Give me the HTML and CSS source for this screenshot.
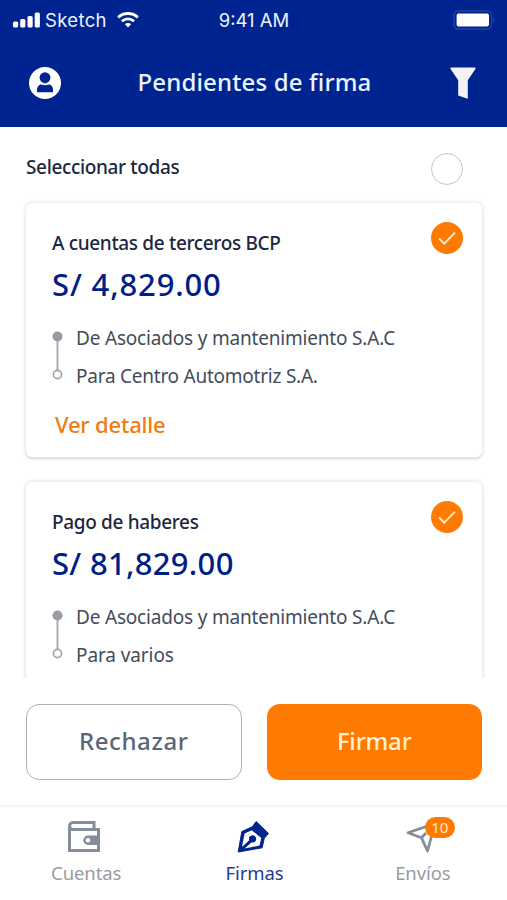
FILE: index.html
```html
<!DOCTYPE html>
<html lang="es">
<head>
<meta charset="utf-8">
<title>Pendientes de firma</title>
<link rel="stylesheet" href="styles.css">
</head>
<body>
<div class="app">
  <header class="header">
    <div class="status">
      <div class="status-left">
        <svg class="signal" width="27" height="16" viewBox="0 0 27 16" fill="#fff"><rect x="0" y="9.5" width="5.2" height="6" rx="1.5"/><rect x="7.2" y="7" width="5.2" height="8.5" rx="1.5"/><rect x="14.5" y="4" width="5.2" height="11.5" rx="1.5"/><rect x="21.700" y="0.500" width="5.200" height="15" rx="1.500"/></svg>
        <span class="carrier">Sketch</span>
        <svg class="wifi" width="22" height="16" viewBox="0 0 22 16"><path d="M1.2 5.3C6.8.3 15.2.3 20.8 5.3" fill="none" stroke="#fff" stroke-width="2.900"/><path d="M4.900 9.200c3.500-3.100 8.700-3.100 12.200 0" fill="none" stroke="#fff" stroke-width="2.600"/><path d="M7.800 12.100c1.800-1.600 4.600-1.600 6.400 0L11 15.400z" fill="#fff"/></svg>
      </div>
      <span class="time">9:41 AM</span>
      <div class="status-right">
        <svg width="42" height="20" viewBox="0 0 42 20"><rect x="1" y="1" width="37.500" height="18" rx="4.500" fill="none" stroke="#1d45a4" stroke-width="1.400"/><rect x="3.600" y="3.600" width="32.400" height="12.800" rx="1.800" fill="#fff"/><path d="M40 7.500c1.500.8 1.500 4.200 0 5z" fill="#1d45a4"/></svg>
      </div>
    </div>
    <div class="navbar">
      <svg class="avatar" width="32" height="32" viewBox="0 0 32 32"><circle cx="16" cy="16" r="16" fill="#fff"/><circle cx="16" cy="10.600" r="5.400" fill="#00248f"/><path d="M8 25.300v-2.500c0-4 3-6 8-6s8 2 8 6v2.500z" fill="#00248f"/><path d="M10.500 14.500c1.200 2.400 3.200 3.200 5.500 3.200s4.300-.8 5.500-3.200" fill="none" stroke="#fff" stroke-width="1.300"/></svg>
      <h1 class="title">Pendientes de firma</h1>
      <svg class="filter" width="26" height="32" viewBox="0 0 26 32"><path d="M1.200.5h23.600c.8 0 1 .9.600 1.500L17.800 13.200V31c0 .6-.4.8-.9.6L8.200 28.500V13.200L.6 2C.1 1.300.4.5 1.200.5z" fill="#f3f3f6"/></svg>
    </div>
  </header>

  <main class="list">
    <div class="select-all">
      <span class="label">Seleccionar todas</span>
      <span class="radio"></span>
    </div>

    <article class="card">
      <div class="card-head">
        <div>
          <h2 class="kind">A cuentas de terceros BCP</h2>
          <p class="amount">S/ 4,829.00</p>
        </div>
        <svg class="check" width="32" height="32" viewBox="0 0 32 32"><circle cx="16" cy="16" r="16" fill="#ff7a00"/><path d="M8.200 16.500l5 5.200L24 10.700" fill="none" stroke="#ffeccb" stroke-width="1.900"/></svg>
      </div>
      <div class="route">
        <svg width="11" height="76" viewBox="0 0 11 76"><path d="M5.500 18v34" stroke="#a9adb4" stroke-width="2"/><circle cx="5.500" cy="17.500" r="5" fill="#979ca6"/><circle cx="5.500" cy="55.500" r="4.100" fill="#fff" stroke="#a0a4aa" stroke-width="1.600"/></svg>
        <div class="ends">
          <p>De Asociados y mantenimiento S.A.C</p>
          <p class="tight">Para Centro Automotriz S.A.</p>
        </div>
      </div>
      <a class="detail">Ver detalle</a>
    </article>

    <article class="card">
      <div class="card-head">
        <div>
          <h2 class="kind">Pago de haberes</h2>
          <p class="amount amount-long">S/ 81,829.00</p>
        </div>
        <svg class="check" width="32" height="32" viewBox="0 0 32 32"><circle cx="16" cy="16" r="16" fill="#ff7a00"/><path d="M8.200 16.500l5 5.200L24 10.700" fill="none" stroke="#ffeccb" stroke-width="1.900"/></svg>
      </div>
      <div class="route">
        <svg width="11" height="76" viewBox="0 0 11 76"><path d="M5.500 18v34" stroke="#a9adb4" stroke-width="2"/><circle cx="5.500" cy="17.500" r="5" fill="#979ca6"/><circle cx="5.500" cy="55.500" r="4.100" fill="#fff" stroke="#a0a4aa" stroke-width="1.600"/></svg>
        <div class="ends">
          <p>De Asociados y mantenimiento S.A.C</p>
          <p class="short">Para varios</p>
        </div>
      </div>
    </article>
  </main>

  <div class="actions">
    <button class="btn btn-outline">Rechazar</button>
    <button class="btn btn-primary">Firmar</button>
  </div>

  <nav class="tabs">
    <a class="tab">
      <svg width="34" height="34" viewBox="0 0 34 34" fill="none" stroke="#858d9a" stroke-width="3"><path d="M2.500 6v24.500h29V9.500H6C1.500 9.500 1.500 2.500 6 2.500h21v7"/><path d="M31.500 15.500H21a4.700 4.700 0 0 0 0 9.400h10.500z" fill="#858d9a" stroke="none"/><circle cx="21" cy="20.200" r="2.300" fill="#fff" stroke="none"/></svg>
      <span>Cuentas</span>
    </a>
    <a class="tab tab-active">
      <svg width="34" height="34" viewBox="0 0 34 34"><path d="M20.200 1.500L32.500 13.500l-4.200 4.800-2.200 9.500L2.200 32 5.800 11.600l10.500-4.800z" fill="#00248f" stroke="#00248f" stroke-width="1" stroke-linejoin="round"/><path d="M15.800 10.300L8.600 13.500 6 27l7.200-6.800a3.600 3.600 0 1 1 2.200 2.200L8.500 28.600 23.500 25.500 25.300 18z" fill="#fff"/><circle cx="16.500" cy="18.800" r="3.300" fill="#00248f"/></svg>
      <span>Firmas</span>
    </a>
    <a class="tab">
      <svg width="34" height="34" viewBox="0 0 34 34" fill="none" stroke="#858d9a" stroke-width="2.800" stroke-linejoin="round"><path d="M31 3.500L4 12.800 17.500 17.800 23.500 31z"/><path d="M17.500 17.800L22 13"/></svg>
      <span>Envíos</span>
      <b class="badge">10</b>
    </a>
  </nav>
</div>
</body>
</html>
```
FILE: styles.css
```css
* { box-sizing: border-box; }
body, h1, h2, p { margin: 0; }
body {
  background: #fff;
  font-family: "Noto Sans", sans-serif;
  color: #1c2740;
}
.app {
  width: 507px;
  height: 900px;
  display: flex;
  flex-direction: column;
  overflow: hidden;
}

.header {
  flex: none;
  height: 127px;
  background: #00248f;
  color: #e9f4ff;
}
.status {
  height: 40px;
  display: grid;
  grid-template-columns: 1fr auto 1fr;
  align-items: center;
  padding: 0 12px 0 13px;
  font: 400 18.500px/24px Inter, sans-serif;
}
.status-left { display: flex; align-items: center; }
.signal { margin-right: 5px; }
.carrier { letter-spacing: 0.350px; }
.wifi { margin-left: 10px; }
.time { font-size: 18.500px; }
.status-right { display: flex; justify-content: flex-end; }

.navbar {
  display: flex;
  align-items: center;
  justify-content: space-between;
  height: 86px;
  padding: 0 31px 0 29px;
}
.title {
  font-size: 24px;
  line-height: 34px;
  font-weight: 500;
  letter-spacing: 0.150px;
  margin: -2px 2px 0 0;
}

.list {
  flex: none;
  height: 551px;
  padding: 0 25px 0 26px;
  overflow: hidden;
}
.select-all {
  height: 76px;
  display: flex;
  justify-content: space-between;
  padding: 26px 19px 0 0;
}
.label {
  font-size: 19px;
  line-height: 28px;
  font-weight: 500;
  letter-spacing: -0.350px;
}
.radio {
  width: 32px;
  height: 32px;
  border: 1.500px solid #c6c6c8;
  border-radius: 50%;
}

.card {
  height: 254px;
  margin-bottom: 25px;
  padding: 26px 19px 0 26px;
  background: #fff;
  border-radius: 6px;
  box-shadow: 0 0 4px 1px #e3e5eb, 0 2px 2px #d5dae2;
}
.card-head {
  display: flex;
  justify-content: space-between;
  align-items: flex-start;
}
.kind {
  font-size: 19px;
  line-height: 28px;
  font-weight: 500;
  letter-spacing: -0.340px;
}
.amount {
  margin-top: 7px;
  font-size: 31px;
  line-height: 40px;
  font-weight: 500;
  letter-spacing: 0.850px;
  color: #001f86;
}
.amount-long { letter-spacing: 0.300px; }
.check { margin-top: -7px; }
.route {
  display: flex;
  gap: 13px;
  margin-top: 15px;
}
.route svg { flex: none; }
.ends p {
  font-size: 19px;
  line-height: 38px;
  letter-spacing: -0.190px;
  color: #434c5c;
  white-space: nowrap;
}
.ends .tight { letter-spacing: -0.240px; }
.ends .short { letter-spacing: -0.100px; }
.detail {
  display: block;
  margin: 14px 0 0 3px;
  font-size: 22px;
  line-height: 30px;
  font-weight: 500;
  letter-spacing: -0.180px;
  color: #f07c12;
}

.actions {
  flex: none;
  height: 127px;
  display: grid;
  grid-template-columns: 1fr 1fr;
  gap: 25px;
  padding: 26px 25px 25px 26px;
}
.btn {
  border: 0;
  border-radius: 13px;
  font: 500 24px/34px "Noto Sans", sans-serif;
  padding: 0 0 2px;
}
.btn-outline {
  background: #fff;
  border: 1.500px solid #aeb1b6;
  color: #5a6575;
  letter-spacing: 0.600px;
}
.btn-primary { background: #ff7a00; color: #fff0d2; letter-spacing: -0.200px; }

.tabs {
  flex: none;
  height: 95px;
  display: grid;
  grid-template-columns: repeat(3, 1fr);
  border-top: 2px solid #f5f5f6;
  padding: 13px 0 0 2px;
}
.tab {
  position: relative;
  display: flex;
  flex-direction: column;
  align-items: center;
  font-size: 18.500px;
  line-height: 26px;
  letter-spacing: -0.100px;
  color: #979ba3;
}
.tab svg { margin: 0 4px 6px 0; }
.tab-active { color: #1c3b99; }
.tabs .tab-active svg { margin-right: 2px; }
.badge {
  position: absolute;
  left: 86px;
  top: -3px;
  width: 30px;
  height: 21px;
  border-radius: 11px;
  background: #ff7a00;
  color: #ffe9c8;
  font-size: 15px;
  font-weight: 400;
  line-height: 21px;
  text-align: center;
}
```
